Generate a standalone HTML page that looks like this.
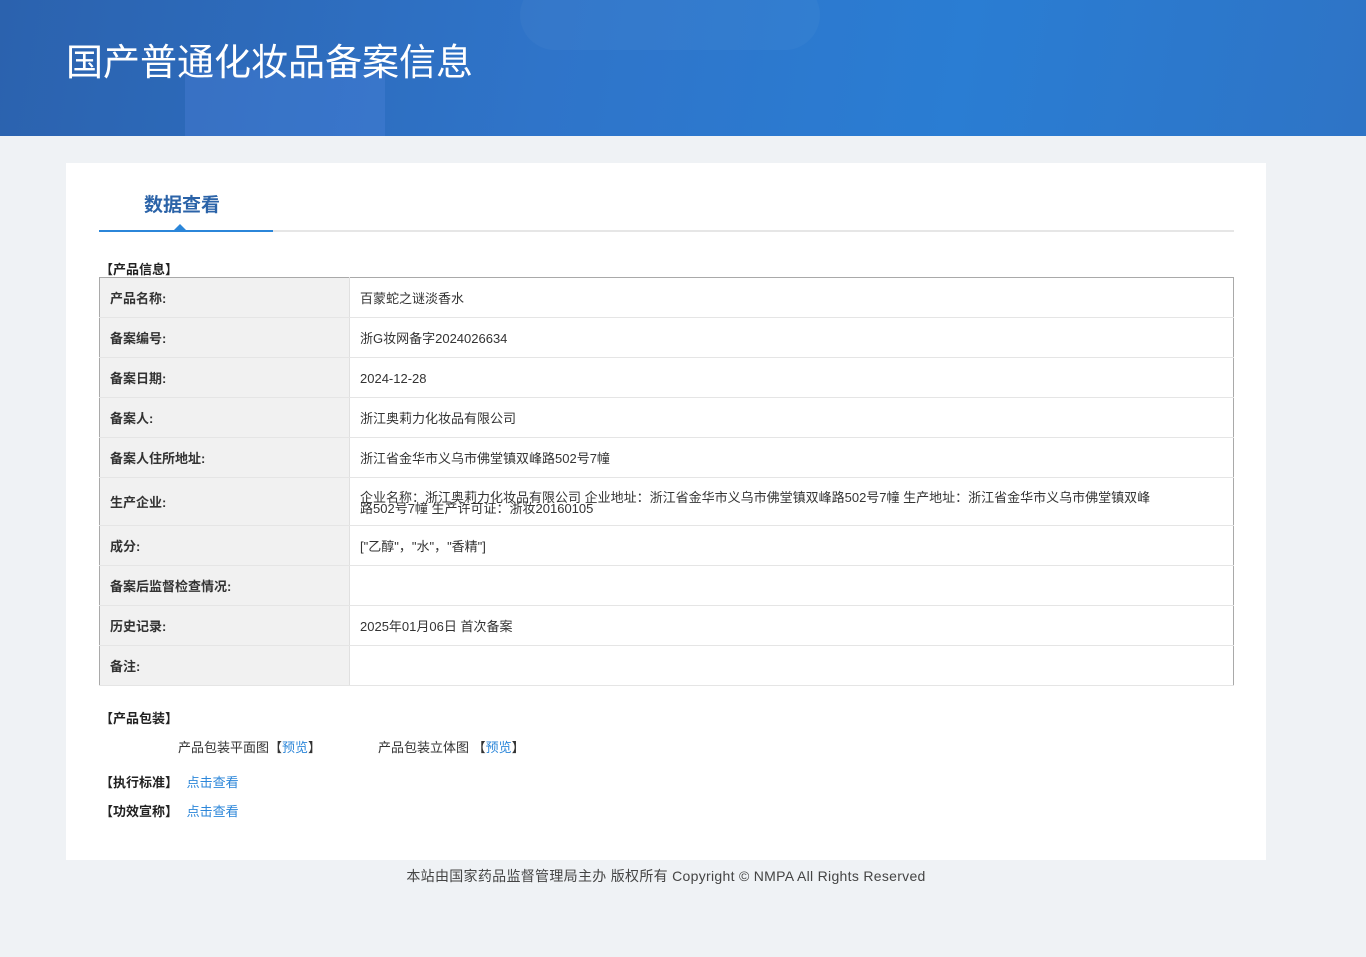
<!DOCTYPE html>
<html><head><meta charset="utf-8"><style>
body{margin:0;background:#eff2f5;font-family:"Liberation Sans","Noto Sans CJK SC",sans-serif;width:1366px;height:957px;position:relative;overflow:hidden}
.hd{position:absolute;left:0;top:0;width:1366px;height:136px;background:linear-gradient(100deg,#2b62ae 0%,#2f74c9 40%,#2a7dd3 70%,#2e74c6 100%);overflow:hidden}
.hd h1{position:absolute;left:66px;top:40px;margin:0;font-size:37px;font-weight:normal;color:#fff;line-height:46px}
.box{position:absolute;left:66px;top:163px;width:1200px;height:697px;background:#fff}
.tab{position:absolute;left:78px;top:27px;font-size:19px;font-weight:bold;color:#2b63a8}
.line{position:absolute;left:33px;top:67px;width:1135px;height:2px;background:#e6e6e6}
.line2{position:absolute;left:33px;top:67px;width:174px;height:2px;background:#2b86d9}
.tri{position:absolute;left:108px;top:61px;width:0;height:0;border-left:6px solid transparent;border-right:6px solid transparent;border-bottom:6px solid #2b86d9}
.sec{position:absolute;font-size:13px;font-weight:bold;color:#222}
table{position:absolute;left:33px;top:114px;width:1135px;border-collapse:collapse;border:1px solid #a9a9a9;font-size:13px;color:#333}
td{border-bottom:1px solid #e5e5e5;padding:2px 10px 0;height:37px;line-height:11px;box-sizing:content-box}
td.l{width:229px;background:#f1f1f1;font-weight:bold;color:#333;border-right:1px solid #e0e0e0}
a{color:#2b86d9;text-decoration:none}
.t{position:absolute;font-size:13px;color:#333}
.ft{position:absolute;top:866px;left:0;width:1332px;text-align:center;font-size:14px;color:#444;letter-spacing:0.3px}
</style></head><body>
<div class="hd">
<div style="position:absolute;left:185px;top:70px;width:200px;height:80px;background:rgba(90,140,230,0.25)"></div>
<div style="position:absolute;left:520px;top:-20px;width:300px;height:70px;border-radius:40px;background:rgba(255,255,255,0.03)"></div>
<h1>国产普通化妆品备案信息</h1></div>
<div class="box">
<div class="tab">数据查看</div>
<div class="line"></div><div class="line2"></div><div class="tri"></div>
<div class="sec" style="left:34px;top:96px">【产品信息】</div>
<table>
<tr><td class="l">产品名称:</td><td>百蒙蛇之谜淡香水</td></tr>
<tr><td class="l">备案编号:</td><td>浙G妆网备字2024026634</td></tr>
<tr><td class="l">备案日期:</td><td>2024-12-28</td></tr>
<tr><td class="l">备案人:</td><td>浙江奥莉力化妆品有限公司</td></tr>
<tr><td class="l">备案人住所地址:</td><td>浙江省金华市义乌市佛堂镇双峰路502号7幢</td></tr>
<tr><td class="l" style="height:45px">生产企业:</td><td>企业名称：浙江奥莉力化妆品有限公司 企业地址：浙江省金华市义乌市佛堂镇双峰路502号7幢 生产地址：浙江省金华市义乌市佛堂镇双峰<br>路502号7幢 生产许可证：浙妆20160105</td></tr>
<tr><td class="l">成分:</td><td>["乙醇"，"水"，"香精"]</td></tr>
<tr><td class="l">备案后监督检查情况:</td><td></td></tr>
<tr><td class="l">历史记录:</td><td>2025年01月06日 首次备案</td></tr>
<tr><td class="l">备注:</td><td></td></tr>
</table>
<div class="sec" style="left:34px;top:545px">【产品包装】</div>
<div class="t" style="left:112px;top:574px">产品包装平面图【<a>预览</a>】</div>
<div class="t" style="left:312px;top:574px">产品包装立体图 【<a>预览</a>】</div>
<div class="sec" style="left:34px;top:609px">【执行标准】 <a style="font-weight:normal;margin-left:5px">点击查看</a></div>
<div class="sec" style="left:34px;top:638px">【功效宣称】 <a style="font-weight:normal;margin-left:5px">点击查看</a></div>
</div>
<div class="ft">本站由国家药品监督管理局主办 版权所有 Copyright © NMPA All Rights Reserved</div>
</body></html>
